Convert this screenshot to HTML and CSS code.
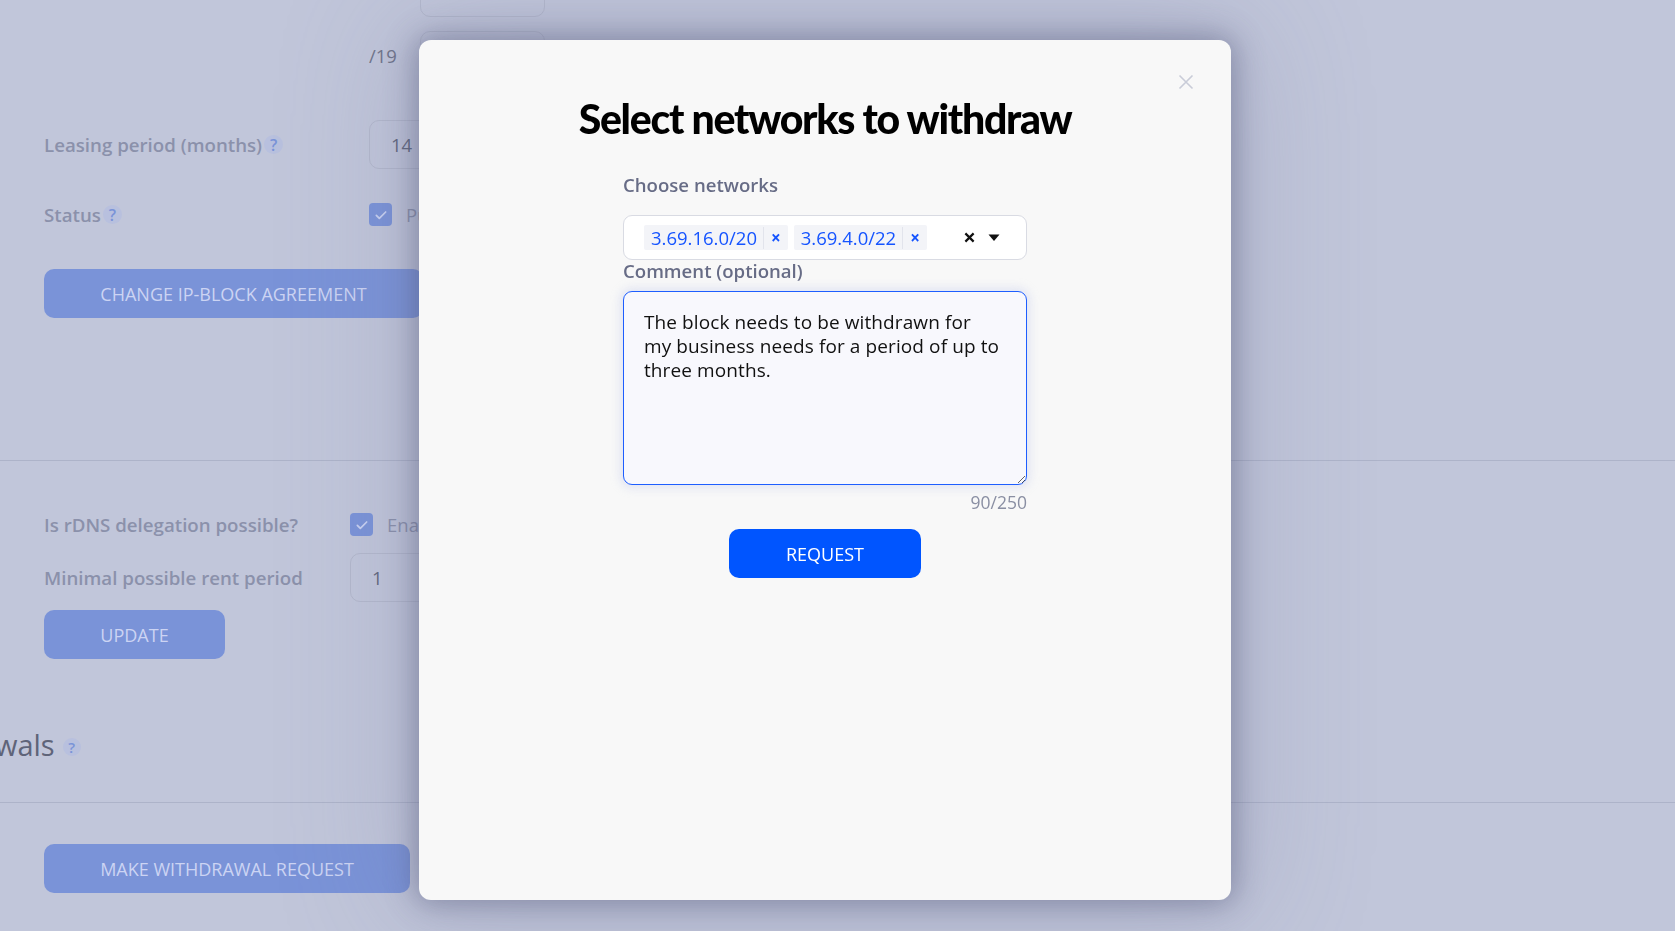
FILE: index.html
```html
<!DOCTYPE html>
<html lang="en">
<head>
<meta charset="utf-8">
<title>Select networks to withdraw</title>
<link rel="stylesheet" href="styles.css">
</head>
<body>
<div class="page">
  <section class="sec sec-agreement">
    <div class="grid-row row-top">
      <span></span>
      <div class="ctrl"><span class="suffix"></span><div class="field field-wide"></div></div>
    </div>
    <div class="grid-row row-prefix">
      <span></span>
      <div class="ctrl"><span class="suffix">/19</span><div class="field field-wide"></div></div>
    </div>
    <div class="grid-row row-lease">
      <span class="label">Leasing period (months)<span class="help">?</span></span>
      <div class="ctrl"><div class="field">14</div></div>
    </div>
    <div class="grid-row row-status">
      <span class="label">Status<span class="help">?</span></span>
      <div class="ctrl">
        <span class="check"><svg viewBox="0 0 24 24" width="16" height="16"><path d="M5 12.5l4.5 4.5L19 7.5" fill="none" stroke="#c9d2f2" stroke-width="2.6" stroke-linecap="round" stroke-linejoin="round"/></svg></span>
        <span class="check-text">Published</span>
      </div>
    </div>
    <button class="btn btn-agreement">CHANGE IP-BLOCK AGREEMENT</button>
  </section>

  <section class="sec sec-rdns">
    <div class="grid-row2 row-rdns">
      <span class="label">Is rDNS delegation possible?</span>
      <div class="ctrl">
        <span class="check"><svg viewBox="0 0 24 24" width="16" height="16"><path d="M5 12.5l4.5 4.5L19 7.5" fill="none" stroke="#c9d2f2" stroke-width="2.6" stroke-linecap="round" stroke-linejoin="round"/></svg></span>
        <span class="check-text">Enabled</span>
      </div>
    </div>
    <div class="grid-row2 row-min">
      <span class="label">Minimal possible rent period</span>
      <div class="ctrl"><div class="field">1</div></div>
    </div>
    <button class="btn btn-update">UPDATE</button>
    <h2 class="heading"><span class="heading-text">Withdrawals</span><span class="help help-lg">?</span></h2>
  </section>

  <section class="sec sec-withdraw">
    <button class="btn btn-withdraw">MAKE WITHDRAWAL REQUEST</button>
  </section>
</div>

<div class="overlay">
  <div class="modal">
    <button class="close" aria-label="Close">
      <svg viewBox="0 0 16 16" width="16" height="16"><path d="M1.5 1.5l13 13M14.5 1.5l-13 13" stroke="#c9ccd8" stroke-width="1.6" fill="none"/></svg>
    </button>
    <h1 class="title">Select networks to withdraw</h1>
    <div class="form">
      <label class="flabel">Choose networks</label>
      <div class="select">
        <div class="tags">
          <span class="tag"><span class="tag-text">3.69.16.0/20</span><span class="tag-x">×</span></span>
          <span class="tag"><span class="tag-text">3.69.4.0/22</span><span class="tag-x">×</span></span>
        </div>
        <span class="clear">
          <svg viewBox="0 0 12 12" width="11" height="11"><path d="M1.5 1.5l9 9M10.5 1.5l-9 9" stroke="#111" stroke-width="2.4" fill="none"/></svg>
        </span>
        <span class="caret">
          <svg viewBox="0 0 12 8" width="12" height="8"><path d="M0.5 0.5h11L6 7z" fill="#111"/></svg>
        </span>
      </div>
      <label class="flabel flabel-comment">Comment (optional)</label>
      <textarea class="comment">The block needs to be withdrawn for my business needs for a period of up to three months.</textarea>
      <div class="counter">90/250</div>
      <button class="btn-request">REQUEST</button>
    </div>
  </div>
</div>
</body>
</html>
```

FILE: styles.css
```css
* { box-sizing: border-box; }

html, body {
  margin: 0;
  padding: 0;
  width: 1675px;
  height: 931px;
  overflow: hidden;
  background: #c1c6da;
  font-family: "Open Sans", "Noto Sans", sans-serif;
}

.page {
  padding-left: 44px;
  color: #8b91ab;
}

.sec {
  border-bottom: 1px solid #adb3c9;
  margin-left: -44px;
  padding-left: 44px;
}

.sec-agreement {
  height: 461px;
  display: flex;
  flex-direction: column;
  align-items: flex-start;
}

.grid-row {
  display: grid;
  grid-template-columns: 325px 1fr;
  align-items: center;
  width: 500px;
}

.grid-row2 {
  display: grid;
  grid-template-columns: 306px 1fr;
  align-items: center;
  width: 500px;
}

.ctrl {
  display: flex;
  align-items: center;
}

.label {
  font-size: 18.7px;
  font-weight: 600;
  color: #8b91ab;
  display: inline-flex;
  align-items: center;
  white-space: nowrap;
}

.help {
  display: inline-flex;
  align-items: center;
  justify-content: center;
  width: 19px;
  height: 19px;
  border-radius: 50%;
  background: #b8c0de;
  color: #7a93d8;
  font-size: 16px;
  font-weight: 600;
  margin-left: 2px;
}

.suffix {
  width: 51px;
  font-size: 18.5px;
  color: #6f7489;
}

.field {
  height: 49px;
  width: 140px;
  border: 1px solid #b3b8cc;
  border-radius: 10px;
  display: flex;
  align-items: center;
  padding-left: 21px;
  font-size: 18.5px;
  color: #60667c;
}

.field-wide { width: 125px; height: 48px; }

.row-top { margin-top: -31px; }
.row-prefix { margin-top: 14px; }
.row-lease { margin-top: 41px; }
.row-status { margin-top: 33px; }

.check {
  width: 23px;
  height: 23px;
  border-radius: 4px;
  background: #7a93d8;
  display: inline-flex;
  align-items: center;
  justify-content: center;
}

.check-text {
  margin-left: 14px;
  font-size: 18.5px;
  color: #8b91ab;
}

.btn {
  border: 0;
  border-radius: 10px;
  background: #7a93d8;
  color: #ccd4f3;
  font-family: "Open Sans", "Noto Sans", sans-serif;
  font-size: 18px;
  height: 49px;
  padding: 0;
  display: block;
}

.btn-agreement { width: 379px; margin-top: 42px; }

.sec-rdns {
  height: 342px;
  display: flex;
  flex-direction: column;
  align-items: flex-start;
}

.row-rdns { margin-top: 51px; height: 23px; }
.row-min { margin-top: 18px; }
.btn-update { width: 181px; margin-top: 8px; }

.heading {
  margin: 65px 0 0 -157px;
  height: 40px;
  display: flex;
  align-items: center;
  font-size: 29px;
  font-weight: 400;
  color: #5f6479;
}

.help-lg {
  margin-left: 8px;
  width: 18px;
  height: 18px;
  font-size: 15px;
  margin-top: 6px;
}

.sec-withdraw {
  border-bottom: 0;
  padding-top: 41px;
}

.btn-withdraw { width: 366px; }

/* overlay + modal */
.overlay {
  position: fixed;
  inset: 0;
}

.modal {
  position: absolute;
  left: 419px;
  top: 40px;
  width: 812px;
  height: 860px;
  background: #f8f8f8;
  border-radius: 12px;
  box-shadow: 0 0 30px 4px rgba(70, 75, 110, 0.45), 0 0 120px 20px rgba(120, 125, 160, 0.25);
  display: flex;
  flex-direction: column;
  align-items: center;
  padding-top: 55px;
}

.close {
  position: absolute;
  top: 34px;
  right: 37px;
  width: 16px;
  height: 16px;
  padding: 0;
  border: 0;
  background: none;
  display: flex;
}

.title {
  margin: 0;
  height: 48px;
  line-height: 48px;
  font-family: "Lato", "Liberation Sans", sans-serif;
  font-weight: 900;
  font-size: 41px;
  letter-spacing: -1.3px;
  color: #000;
  white-space: nowrap;
}

.form {
  width: 404px;
  display: flex;
  flex-direction: column;
  margin-top: 30px;
}

.flabel {
  font-size: 18.6px;
  font-weight: 600;
  line-height: 24px;
  color: #676c86;
}

.flabel-comment {
  line-height: 22px;
  margin-bottom: 9px;
}

.select {
  margin-top: 18px;
  height: 45px;
  border: 1px solid #d9dbe3;
  border-radius: 9px;
  background: #fff;
  display: flex;
  align-items: center;
  padding: 0 26px 0 20px;
}

.tags {
  flex: 1;
  display: flex;
  gap: 6px;
}

.tag {
  height: 25px;
  background: #f3f4f8;
  border-radius: 2px;
  display: inline-flex;
  align-items: center;
  padding: 0 7px;
  color: #1554ff;
}

.tag-text {
  font-size: 18.5px;
  padding-right: 6px;
  border-right: 1px solid #e2e4ec;
  line-height: 22px;
}

.tag-x {
  font-size: 17px;
  font-weight: 700;
  margin-left: 7px;
  line-height: 1;
}

.clear {
  display: flex;
  margin-right: 13px;
}

.caret {
  display: flex;
}

.comment {
  display: block;
  width: 404px;
  height: 194px;
  border: 1px solid #1e5eff;
  border-radius: 9px;
  background: #f8f8fd;
  box-shadow: 0 0 10px 3px rgba(215, 220, 240, 0.7);
  padding: 18px 24px 18px 20px;
  font-family: "Open Sans", "Noto Sans", sans-serif;
  font-size: 19px;
  font-weight: 500;
  letter-spacing: 0.1px;
  line-height: 24px;
  color: #111;
  outline: none;
  resize: vertical;
}

.counter {
  margin-top: 6px;
  text-align: right;
  font-size: 17.5px;
  line-height: 22px;
  color: #8a8fa3;
}

.btn-request {
  align-self: center;
  margin-top: 16px;
  width: 192px;
  height: 49px;
  border: 0;
  border-radius: 10px;
  background: #0055ff;
  color: #fff;
  font-family: "Open Sans", "Noto Sans", sans-serif;
  font-size: 18px;
  font-weight: 500;
  padding: 0;
}
```
